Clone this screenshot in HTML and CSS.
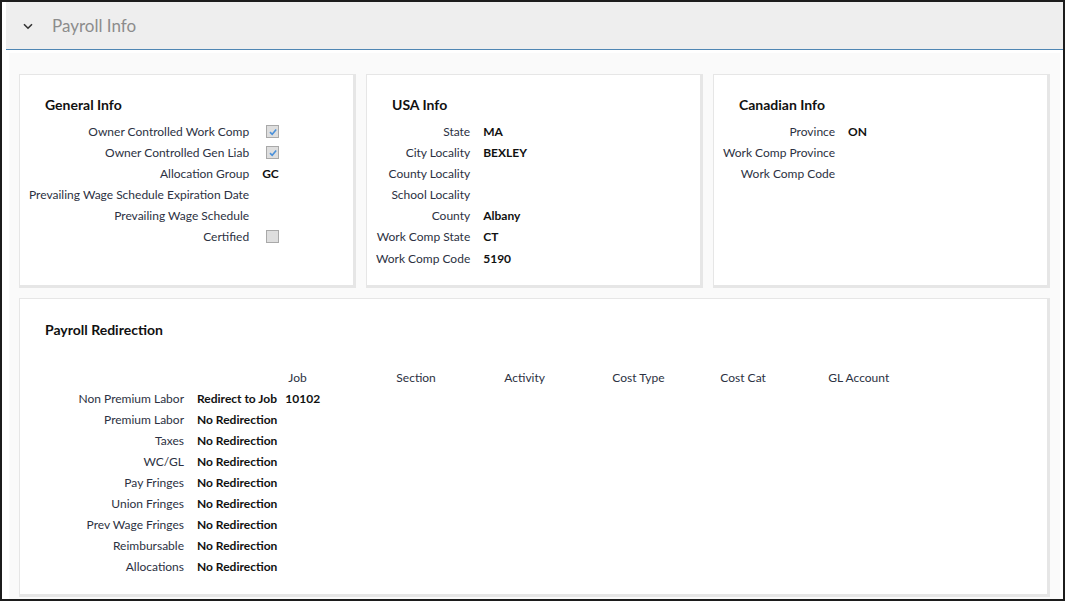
FILE: index.html
```html
<!DOCTYPE html>
<html lang="en">
<head>
<meta charset="utf-8">
<title>Payroll Info</title>
<link rel="stylesheet" href="styles.css">
</head>
<body>
<div class="frame">
  <div class="panel-header">
    <svg class="chevron" width="10" height="7" viewBox="0 0 10 7"><path d="M1 1.2 L5 5.2 L9 1.2" fill="none" stroke="#333" stroke-width="1.6"/></svg>
    <span class="panel-title">Payroll Info</span>
  </div>
  <div class="panel-body">
    <div class="card-row">
      <section class="card">
        <h2 class="card-title">General Info</h2>
        <div class="fields">
          <div class="label">Owner Controlled Work Comp</div><div class="value"><span class="check checked"><svg width="10" height="10" viewBox="0 0 10 10"><path d="M2 5.2 L4.2 7.3 L8.2 2.6" fill="none" stroke="#4a90d9" stroke-width="1.6"/></svg></span></div>
          <div class="label">Owner Controlled Gen Liab</div><div class="value"><span class="check checked"><svg width="10" height="10" viewBox="0 0 10 10"><path d="M2 5.2 L4.2 7.3 L8.2 2.6" fill="none" stroke="#4a90d9" stroke-width="1.6"/></svg></span></div>
          <div class="label">Allocation Group</div><div class="value">GC</div>
          <div class="label">Prevailing Wage Schedule Expiration Date</div><div class="value"></div>
          <div class="label">Prevailing Wage Schedule</div><div class="value"></div>
          <div class="label">Certified</div><div class="value"><span class="check"></span></div>
        </div>
      </section>
      <section class="card">
        <h2 class="card-title">USA Info</h2>
        <div class="fields">
          <div class="label">State</div><div class="value">MA</div>
          <div class="label">City Locality</div><div class="value">BEXLEY</div>
          <div class="label">County Locality</div><div class="value"></div>
          <div class="label">School Locality</div><div class="value"></div>
          <div class="label">County</div><div class="value">Albany</div>
          <div class="label">Work Comp State</div><div class="value">CT</div>
          <div class="label">Work Comp Code</div><div class="value">5190</div>
        </div>
      </section>
      <section class="card">
        <h2 class="card-title">Canadian Info</h2>
        <div class="fields">
          <div class="label">Province</div><div class="value">ON</div>
          <div class="label">Work Comp Province</div><div class="value"></div>
          <div class="label">Work Comp Code</div><div class="value"></div>
        </div>
      </section>
    </div>
    <section class="card wide">
      <h2 class="card-title redir-title">Payroll Redirection</h2>
      <div class="redir">
        <div></div><div></div>
        <div class="colhead">Job</div><div class="colhead">Section</div><div class="colhead">Activity</div><div class="colhead">Cost Type</div><div class="colhead">Cost Cat</div><div class="colhead">GL Account</div>

        <div class="label">Non Premium Labor</div><div class="value mode">Redirect to Job</div><div class="value">10102</div><div></div><div></div><div></div><div></div><div></div>
        <div class="label">Premium Labor</div><div class="value mode">No Redirection</div><div></div><div></div><div></div><div></div><div></div><div></div>
        <div class="label">Taxes</div><div class="value mode">No Redirection</div><div></div><div></div><div></div><div></div><div></div><div></div>
        <div class="label">WC/GL</div><div class="value mode">No Redirection</div><div></div><div></div><div></div><div></div><div></div><div></div>
        <div class="label">Pay Fringes</div><div class="value mode">No Redirection</div><div></div><div></div><div></div><div></div><div></div><div></div>
        <div class="label">Union Fringes</div><div class="value mode">No Redirection</div><div></div><div></div><div></div><div></div><div></div><div></div>
        <div class="label">Prev Wage Fringes</div><div class="value mode">No Redirection</div><div></div><div></div><div></div><div></div><div></div><div></div>
        <div class="label">Reimbursable</div><div class="value mode">No Redirection</div><div></div><div></div><div></div><div></div><div></div><div></div>
        <div class="label">Allocations</div><div class="value mode">No Redirection</div><div></div><div></div><div></div><div></div><div></div><div></div>
      </div>
    </section>
  </div>
</div>
</body>
</html>
```

FILE: styles.css
```css
* { box-sizing: border-box; }

html, body {
  margin: 0;
  padding: 0;
  background: #fff;
}

body {
  font-family: Lato, "Open Sans", Arial, sans-serif;
  color: #333;
}

.frame {
  width: 1065px;
  height: 601px;
  border: 2px solid #1c1c1c;
  padding: 0 0 0 4px;
  overflow: hidden;
  display: flex;
  flex-direction: column;
  background: #fff;
}

.panel-header {
  height: 48px;
  background: #eeeeee;
  border-bottom: 1px solid #4f86b3;
  display: flex;
  align-items: center;
  flex: none;
}

.chevron {
  margin-left: 17px;
  margin-top: 1px;
}

.panel-title {
  margin-left: 19px;
  font-size: 17px;
  color: #8c8c8c;
  margin-top: -1px;
}

.panel-body {
  margin: 3px 3px 0 3px;
  background: #fafafa;
  padding: 21px 10px 10px 10px;
  display: flex;
  flex-direction: column;
  gap: 10px;
  flex: 1;
  min-height: 0;
}

.card-row {
  display: flex;
  gap: 10px;
}

.card {
  flex: 1;
  background: #fff;
  border-style: solid;
  border-color: #e6e6e6;
  border-width: 1px 3px 3px 1px;
  padding: 20px 9px 16px 9px;
}

.card.wide {
  flex: none;
  padding-top: 21px;
  padding-bottom: 17px;
}

.card-title {
  margin: 0 0 6px 16px;
  font-size: 14px;
  line-height: 20px;
  font-weight: 700;
  color: #111;
}

.redir-title {
  margin-bottom: 27px;
}

.fields {
  display: grid;
  grid-template-columns: max-content 1fr;
  grid-auto-rows: 21.1px;
  font-size: 12px;
  line-height: 21px;
}

.label {
  text-align: right;
  padding-right: 13px;
  color: #2c3142;
  white-space: nowrap;
}

.value {
  font-weight: 700;
  color: #111;
  white-space: nowrap;
}

.check {
  display: inline-block;
  width: 13px;
  height: 13px;
  margin-left: 4px;
  vertical-align: -2px;
  background: #dedede;
  border: 1px solid #a9a9a9;
}

.check svg {
  display: block;
  margin: 0.5px 0 0 0.5px;
}

.redir {
  display: grid;
  grid-template-columns: 168px max-content repeat(6, 108px);
  grid-auto-rows: 21px;
  font-size: 12px;
  line-height: 21px;
}

.redir .mode {
  padding-right: 8px;
}

.colhead {
  padding-left: 3px;
  color: #2c3142;
  white-space: nowrap;
}
```
